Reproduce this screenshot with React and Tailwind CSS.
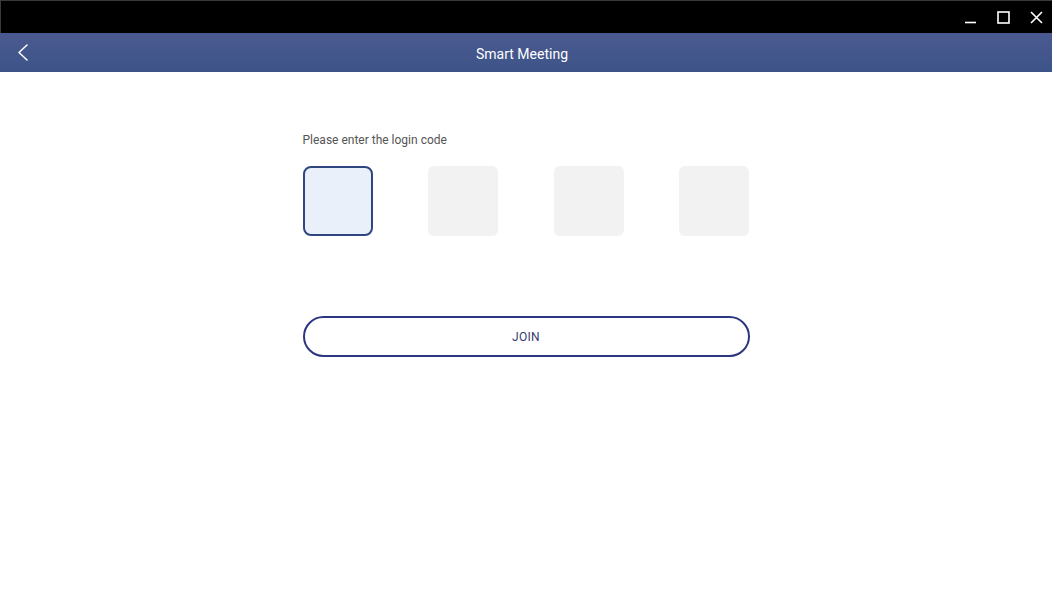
export default function App() {
  const boxes = [0, 1, 2, 3];

  return (
    <div className="w-[1052px] h-[592px] bg-white flex flex-col overflow-hidden" style={{ fontFamily: 'Roboto, "Liberation Sans", sans-serif' }}>
      {/* window chrome */}
      <div className="h-[33px] bg-black border-t border-l border-[#3a3a3a] flex justify-end items-center pr-[9px] shrink-0">
        <div className="flex items-center gap-[20px]">
          <svg width="13" height="13" viewBox="0 0 13 13">
            <path d="M1 11.5H12" stroke="white" strokeWidth="1.6" />
          </svg>
          <svg width="13" height="13" viewBox="0 0 13 13">
            <rect x="1" y="1" width="11" height="11" fill="none" stroke="white" strokeWidth="1.6" />
          </svg>
          <svg width="13" height="13" viewBox="0 0 13 13">
            <path d="M1 1L12 12M12 1L1 12" stroke="white" strokeWidth="1.6" />
          </svg>
        </div>
      </div>

      {/* header */}
      <div className="relative h-[39px] bg-gradient-to-b from-[#4a5a91] to-[#3d5488] flex items-center justify-center pt-[3px] pr-[8px] shrink-0">
        <button className="absolute left-[17px] top-[11px]">
          <svg width="12" height="17" viewBox="0 0 12 17">
            <path d="M10 1L2 8.5L10 16" fill="none" stroke="white" strokeWidth="1.5" strokeLinecap="round" strokeLinejoin="round" />
          </svg>
        </button>
        <span className="text-white text-[14px]">Smart Meeting</span>
      </div>

      {/* body */}
      <div className="flex justify-center">
        <div className="w-[447px] pt-[61px]">
          <p className="text-[12px] text-[#555] leading-[14px]">Please enter the login code</p>

          <div className="flex justify-between mt-[19px]">
            {boxes.map((i) => (
              <div
                key={i}
                className={
                  i === 0
                    ? 'w-[70px] h-[70px] rounded-[8px] border-2 border-[#2f4680] bg-[#eaf0fa]'
                    : 'w-[70px] h-[70px] rounded-[6px] bg-[#f2f2f2]'
                }
              />
            ))}
          </div>

          <button className="mt-[80px] w-full h-[41px] rounded-full border-2 border-[#2c3681] bg-white text-[12px] text-[#363c6e] tracking-wide">
            JOIN
          </button>
        </div>
      </div>
    </div>
  );
}
